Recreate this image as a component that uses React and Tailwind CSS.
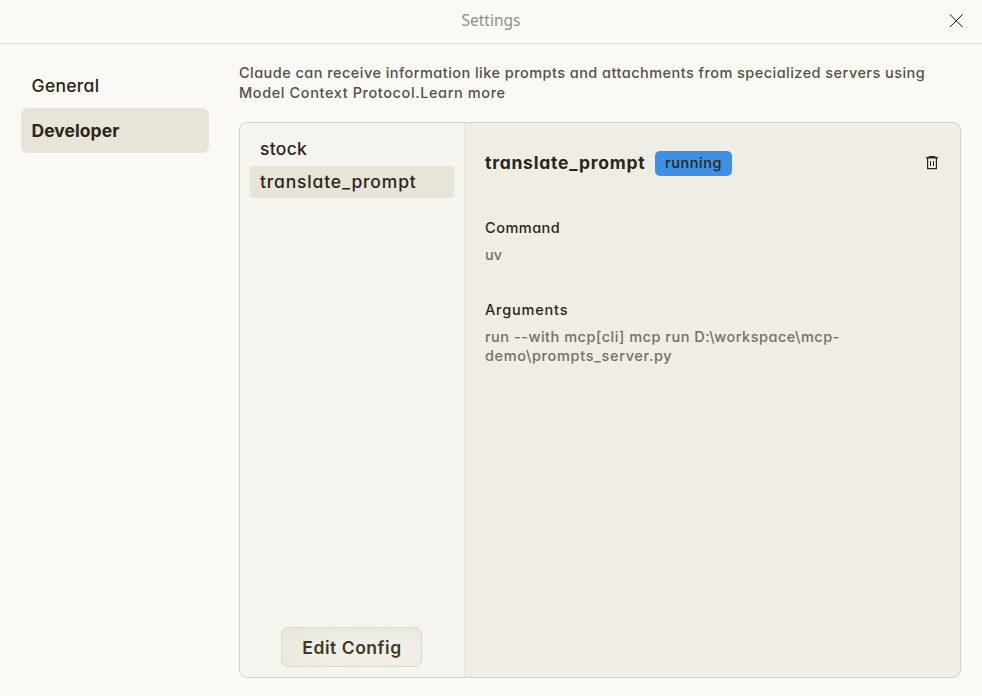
const nav = [
  { label: 'General', style: 'font-medium tracking-[0.3px]' },
  { label: 'Developer', style: 'bg-[#e8e4d8] font-bold tracking-[0.05px]' },
];

function CloseIcon() {
  return (
    <svg width="14" height="14" viewBox="0 0 14 14" fill="none" stroke="#111" strokeWidth="1">
      <path d="M1 0.5 13.5 13M13.5 0.5 1 13" />
    </svg>
  );
}

function TrashIcon() {
  return (
    <svg width="14" height="14" viewBox="0 0 14 14" fill="#29261b">
      <path d="M4.2 0h5.6l1 1H13v1.2H1V1h2.2Z" />
      <path d="M2 2h10v11.2H2ZM3.2 2.2V12h7.6V2.2Z" fillRule="evenodd" />
      <path d="M5 5h1v5H5ZM8 5h1v5H8Z" />
    </svg>
  );
}

export default function App() {
  return (
    <div className="flex h-[696px] w-[982px] flex-col overflow-hidden bg-[#faf9f5] font-['Inter','Liberation_Sans',sans-serif] text-[#29261b] [font-feature-settings:'cv11']">
      <header className="grid h-11 shrink-0 grid-cols-[1fr_auto_1fr] items-center border-b border-[#dddcd6] pb-[3px]">
        <div />
        <h1 className="font-['Noto_Sans',sans-serif] text-[15.5px] leading-5 text-[#929089]">Settings</h1>
        <button className="mr-[19px] justify-self-end pt-px" aria-label="Close"><CloseIcon /></button>
      </header>
      <div className="flex min-h-0 flex-1 pr-[21px] pb-[18px] pl-[21px]">
        <nav className="mr-[30px] w-[188px] shrink-0 pt-[19px]">
          {nav.map((n) => (
            <div key={n.label} className={`flex h-[45px] items-center rounded-[7px] px-[10.5px] text-[17.5px] leading-6 ${n.style}`}>
              {n.label}
            </div>
          ))}
        </nav>
        <main className="flex min-w-0 flex-1 flex-col pt-[19px]">
          <p className="text-[14.5px] leading-5 font-medium tracking-[0.455px] whitespace-nowrap text-[#535146]">
            Claude can receive information like prompts and attachments from specialized servers using
            <br />
            <span className="tracking-[0.6px]">Model Context Protocol.Learn more</span>
          </p>
          <section className="mt-[19px] flex min-h-0 flex-1 overflow-hidden rounded-[8px] border border-[#d3d2ca] bg-[#f0ede5]">
            <div className="flex w-[225px] shrink-0 flex-col border-r border-[#e5e3db] bg-[#f5f4ef] px-[10px] pt-[10px] pb-[10px] text-[17.5px]">
              <div className="flex h-8 items-center rounded px-[10px] font-medium tracking-[0.3px]">stock</div>
              <div className="mt-px flex h-8 items-center rounded bg-[#e8e4d8] px-[10px] font-medium tracking-[0.83px]">translate_prompt</div>
              <button className="mt-auto ml-[31px] h-10 w-[141px] rounded-[7px] border border-[#dddacd] bg-[radial-gradient(ellipse_at_65%_65%,#f1efe8_30%,#e8e5d7_100%)] pt-0.5 pl-px font-semibold tracking-[0.55px] text-[#3d3929]">
                Edit Config
              </button>
            </div>
            <div className="flex min-w-0 flex-1 flex-col px-5 pt-7">
              <div className="flex h-[25px] items-center">
                <h2 className="w-[160px] text-[17.5px] font-bold tracking-[0.77px] whitespace-nowrap">translate_prompt</h2>
                <span className="ml-[10px] flex h-[25px] w-[77px] items-center justify-center rounded-[5px] bg-[#3f8fe2] pb-px text-[14.5px] font-medium tracking-[0.55px]">running</span>
                <button className="mr-px mb-px ml-auto pb-px" aria-label="Delete"><TrashIcon /></button>
              </div>
              <h3 className="mt-[42px] text-[14.5px] leading-5 font-medium tracking-[0.5px]">Command</h3>
              <p className="mt-[7px] text-[14.5px] leading-5 font-medium text-[#737163]">uv</p>
              <h3 className="mt-[35px] text-[14.5px] leading-5 font-medium tracking-[0.8px]">Arguments</h3>
              <p className="mt-[7px] text-[14.5px] leading-[19px] font-medium tracking-[0.515px] text-[#737163]">
                run --with mcp[cli] mcp run D:\workspace\mcp-
                <br />
                <span className="tracking-[0.66px]">demo\prompts_server.py</span>
              </p>
            </div>
          </section>
        </main>
      </div>
    </div>
  );
}
